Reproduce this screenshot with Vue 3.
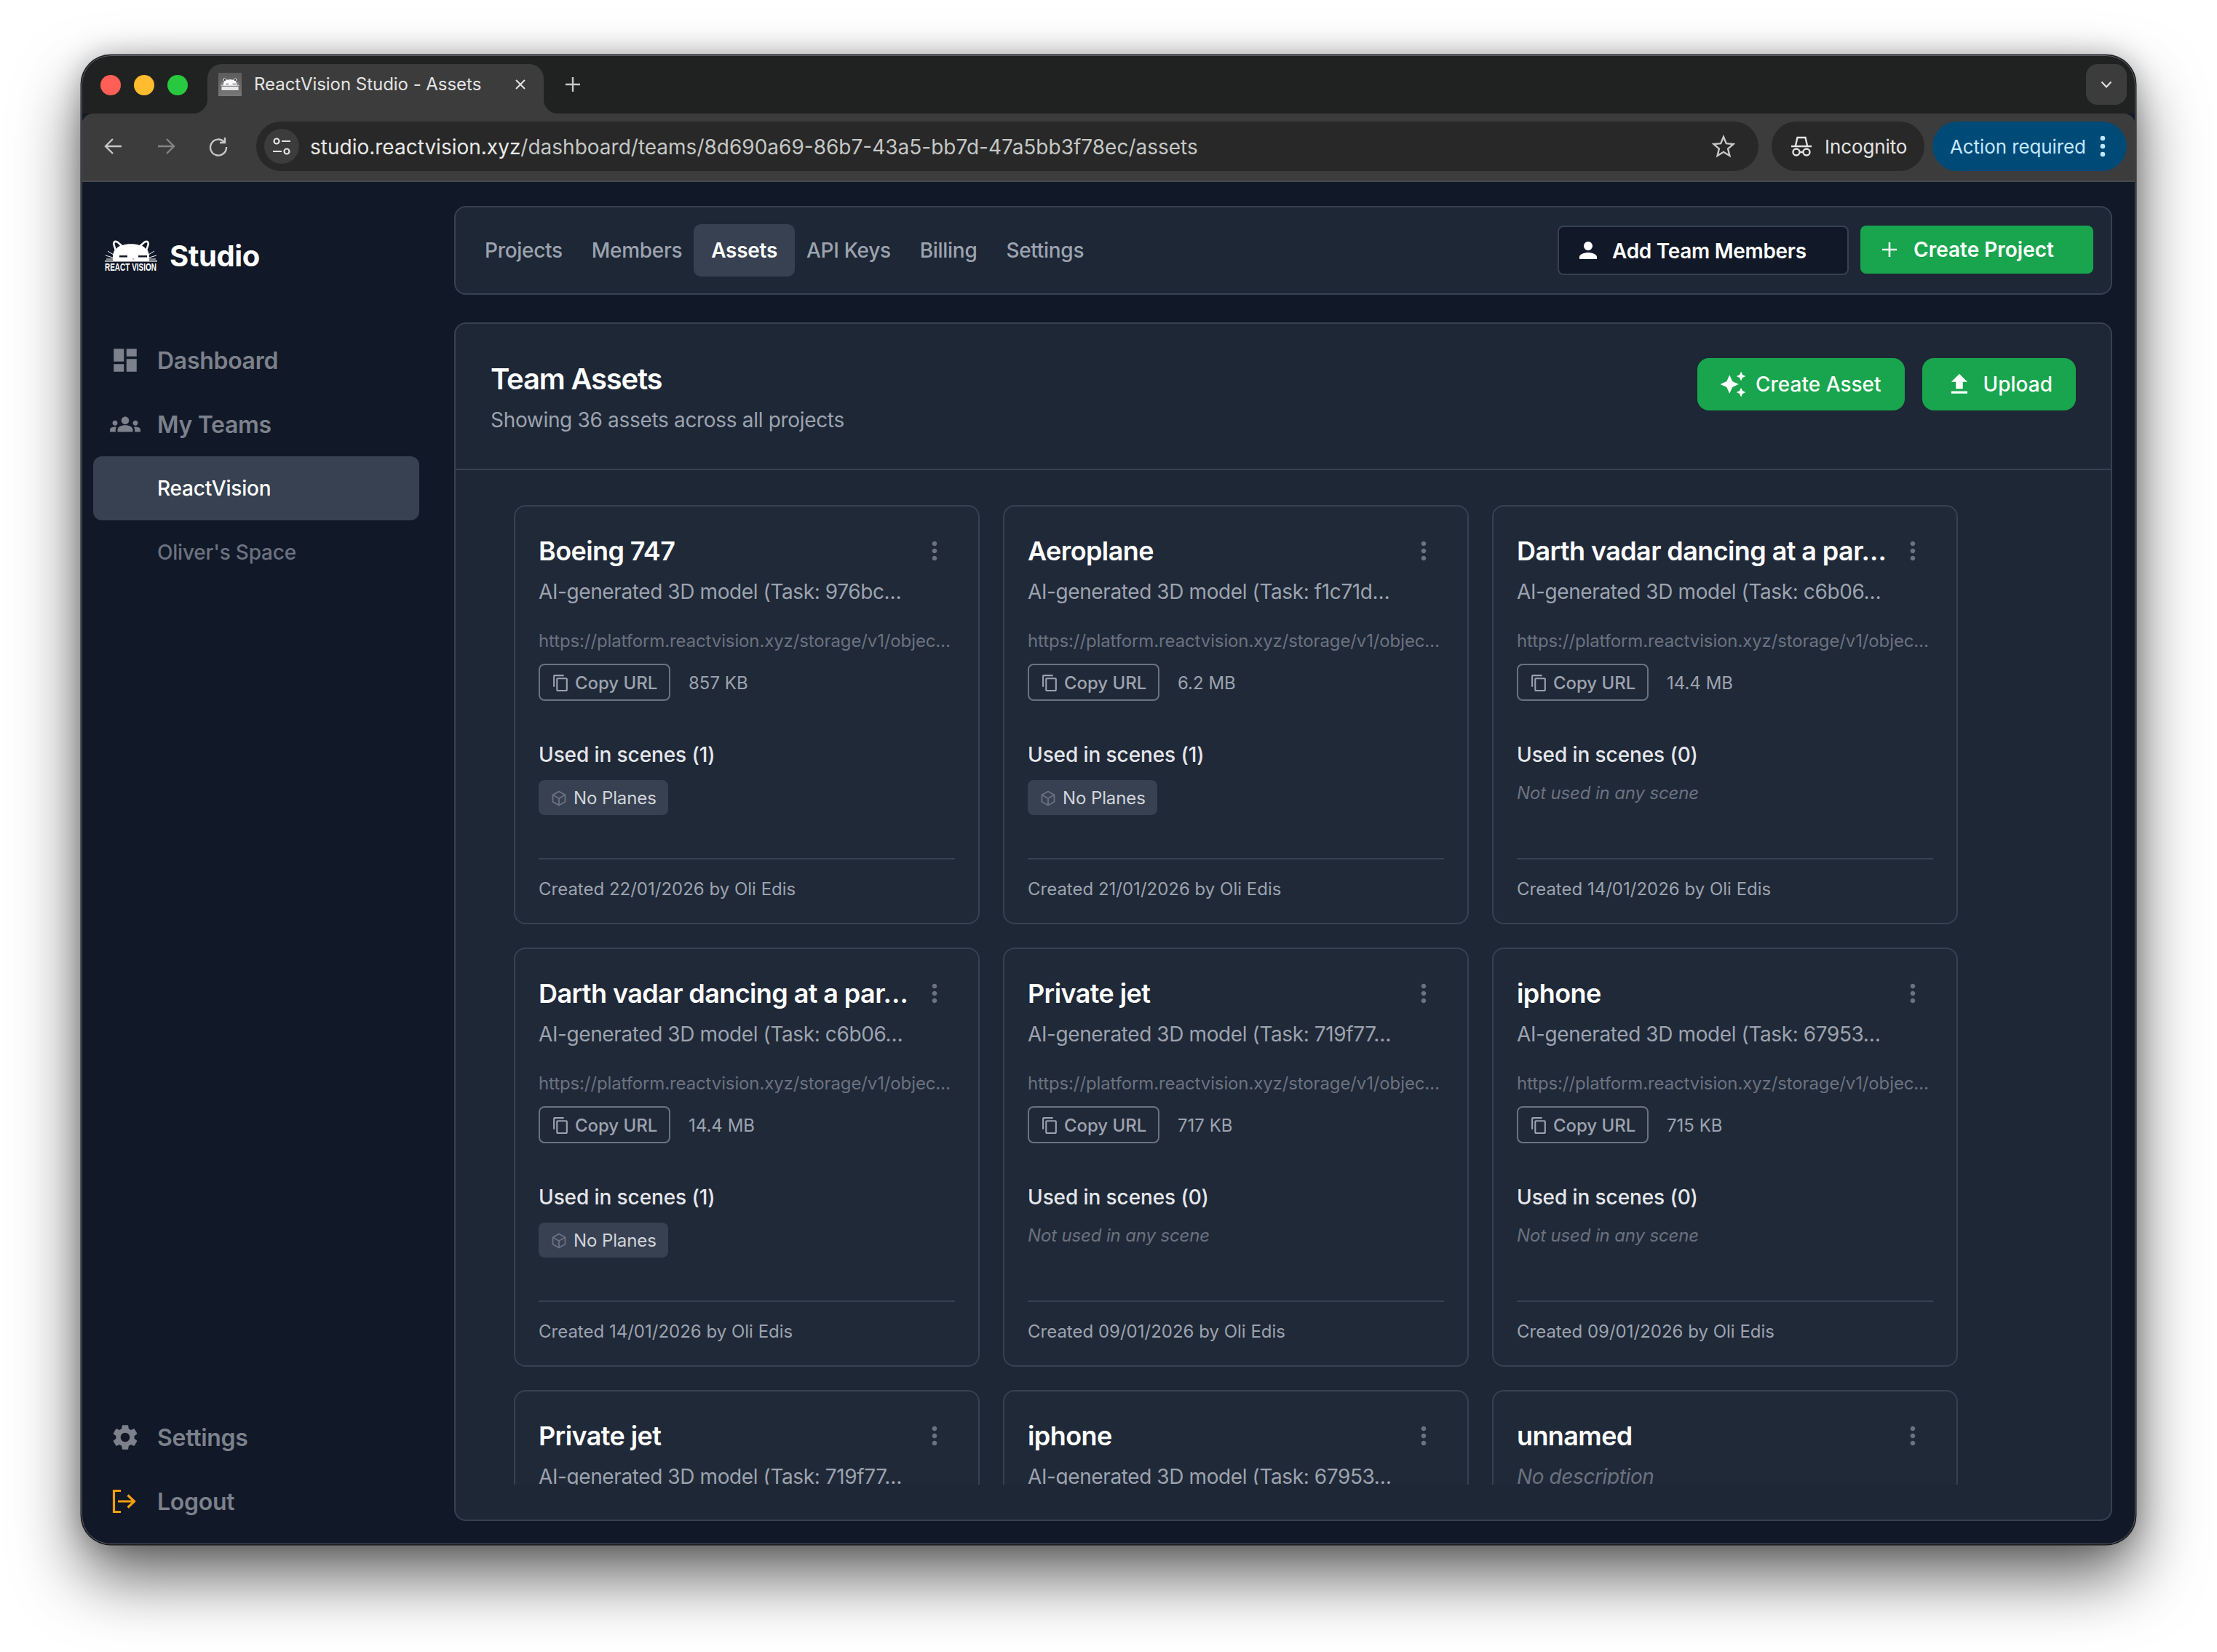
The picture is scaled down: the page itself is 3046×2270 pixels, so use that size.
<script setup>
const tabs = ['Projects', 'Members', 'Assets', 'API Keys', 'Billing', 'Settings']
const url = 'https://platform.reactvision.xyz/storage/v1/objec…'
const cards = [
  { name: 'Boeing 747', desc: 'AI-generated 3D model (Task: 976bc…', size: '857 KB', scenes: 1, date: '22/01/2026' },
  { name: 'Aeroplane', desc: 'AI-generated 3D model (Task: f1c71d…', size: '6.2 MB', scenes: 1, date: '21/01/2026' },
  { name: 'Darth vadar dancing at a par…', desc: 'AI-generated 3D model (Task: c6b06…', size: '14.4 MB', scenes: 0, date: '14/01/2026' },
  { name: 'Darth vadar dancing at a par…', desc: 'AI-generated 3D model (Task: c6b06…', size: '14.4 MB', scenes: 1, date: '14/01/2026' },
  { name: 'Private jet', desc: 'AI-generated 3D model (Task: 719f77…', size: '717 KB', scenes: 0, date: '09/01/2026' },
  { name: 'iphone', desc: 'AI-generated 3D model (Task: 67953…', size: '715 KB', scenes: 0, date: '09/01/2026' },
  { name: 'Private jet', desc: 'AI-generated 3D model (Task: 719f77…' },
  { name: 'iphone', desc: 'AI-generated 3D model (Task: 67953…' },
  { name: 'unnamed', desc: 'No description', empty: true }
]
</script>

<template>
  <div class="window">
    <svg class="defs" width="0" height="0">
      <symbol id="cat" viewBox="0 0 72 30">
        <path fill="#fff" d="M11 28C10.500 22 11.500 17 13.500 13.500L11 6C10.500 1 14 -1 18 1.500L24.500 7C29 4.500 43 4.500 47.500 7L54 1.500C58 -1 61.500 1 61 6L58.500 13.500C60.500 17 61.500 22 61 28Z" />
        <path fill="#111827" d="M13.500 5C13.500 3.200 15.500 2.800 17 4L21 7.500C18.500 9 16.500 10.500 15.500 12ZM58.500 5C58.500 3.200 56.500 2.800 55 4L51 7.500C53.500 9 55.500 10.500 56.500 12Z" />
        <rect x="20" y="21" width="11" height="2.500" fill="#111827" />
        <rect x="46" y="21" width="12" height="2.500" fill="#111827" />
        <circle cx="39" cy="26" r="1.300" fill="#f5a3c7" />
        <path stroke="#fff" stroke-width="1" fill="none" d="M4 15L12 20M1 21L11 24M2 26H11M68 15L60 20M71 21L61 24M70 26H61" />
        <rect x="0" y="28" width="72" height="1.500" fill="#fff" />
      </symbol>
    </svg>

    <header class="strip">
      <div class="lights"><i class="red"></i><i class="yellow"></i><i class="green"></i></div>
      <div class="tab">
        <span class="favicon">
          <svg width="26" height="26" viewBox="0 0 72 72"><use href="#cat" width="72" height="30" y="12" /><rect x="4" y="44" width="64" height="14" fill="#e8e8e8" /></svg>
        </span>
        <span class="tab-title">ReactVision Studio - Assets</span>
        <svg class="tab-x" viewBox="0 0 16 16" width="16" height="16"><path d="M2 2L14 14M14 2L2 14" stroke="#e3e3e3" stroke-width="2" fill="none" /></svg>
      </div>
      <svg class="tab-plus" viewBox="0 0 22 22" width="22" height="22"><path d="M11 1V21M1 11H21" stroke="#c7c7c7" stroke-width="2.400" fill="none" /></svg>
      <div class="strip-fill"></div>
      <div class="tab-search"><svg viewBox="0 0 16 10" width="16" height="10"><path d="M1.500 1.500L8 8.500L14.500 1.500" stroke="#e3e3e3" stroke-width="2" fill="none" /></svg></div>
    </header>

    <div class="toolbar">
      <div class="tb-btn"><svg viewBox="0 0 28 28" width="28" height="28"><path d="M25 14H4M13 4L3 14L13 24" stroke="#c7c7c7" stroke-width="2.400" fill="none" /></svg></div>
      <div class="tb-btn"><svg viewBox="0 0 28 28" width="28" height="28"><path d="M3 14H24M15 4L25 14L15 24" stroke="#858585" stroke-width="2.400" fill="none" /></svg></div>
      <div class="tb-btn"><svg viewBox="0 0 28 28" width="28" height="28"><path d="M22 8A11 11 0 1 0 25 15M23 2V9H16" stroke="#c7c7c7" stroke-width="2.400" fill="none" /></svg></div>
      <div class="omni">
        <span class="tune"><svg viewBox="0 0 26 26" width="26" height="26"><g stroke="#e3e3e3" stroke-width="2.200" fill="none"><circle cx="6" cy="6" r="3.500" /><path d="M13 6H25M1 20H13" /><circle cx="20" cy="20" r="3.500" /></g></svg></span>
        <span class="url"><b>studio.reactvision.xyz</b>/dashboard/teams/8d690a69-86b7-43a5-bb7d-47a5bb3f78ec/assets</span>
        <svg class="star" viewBox="0 0 32 32" width="32" height="32"><path d="M16 3L19.800 12.200L29.500 13L22.100 19.400L24.400 29L16 23.800L7.600 29L9.900 19.400L2.500 13L12.200 12.200Z" stroke="#c7c7c7" stroke-width="2.400" fill="none" /></svg>
      </div>
      <div class="incog">
        <svg viewBox="0 0 30 30" width="30" height="30"><g fill="none" stroke="#e3e3e3" stroke-width="2.400"><path d="M1 15H29M7 14L9.500 3H20.500L23 14" /><circle cx="8" cy="23" r="4.500" /><circle cx="22" cy="23" r="4.500" /><path d="M12.500 23H17.500" /></g></svg>
        <span>Incognito</span>
      </div>
      <div class="action">
        <span>Action required</span>
        <svg viewBox="0 0 8 30" width="8" height="30"><g fill="#c2e7ff"><circle cx="4" cy="4" r="3.300" /><circle cx="4" cy="15" r="3.300" /><circle cx="4" cy="26" r="3.300" /></g></svg>
      </div>
    </div>

    <div class="app">
      <aside class="sidebar">
        <div class="brand">
          <div class="logo">
            <svg width="72" height="30" viewBox="0 0 72 30"><use href="#cat" width="72" height="30" /></svg>
            <span class="logo-label">REACT VISION</span>
          </div>
          <span class="brand-name">Studio</span>
        </div>
        <nav class="side-nav">
          <a class="side-item">
            <svg class="side-ic" viewBox="0 0 24 24"><path d="M3 13h8V3H3v10zm0 8h8v-6H3v6zm10 0h8V11h-8v10zm0-18v6h8V3h-8z" /></svg>
            Dashboard
          </a>
          <a class="side-item">
            <svg class="side-ic" viewBox="0 0 24 24"><path d="M12 12.750c1.630 0 3.070.390 4.240.900 1.080.480 1.760 1.560 1.760 2.730V18H6v-1.610c0-1.180.680-2.260 1.760-2.730 1.170-.520 2.610-.910 4.240-.910zM4 13c1.100 0 2-.900 2-2s-.900-2-2-2-2 .900-2 2 .900 2 2 2zm1.130 1.100c-.370-.060-.740-.100-1.130-.100-.990 0-1.930.210-2.780.580C.480 14.900 0 15.620 0 16.430V18h4.500v-1.610c0-.830.230-1.610.630-2.290zM20 13c1.100 0 2-.900 2-2s-.900-2-2-2-2 .900-2 2 .900 2 2 2zm4 3.430c0-.810-.480-1.530-1.220-1.850-.850-.370-1.790-.580-2.780-.580-.390 0-.760.040-1.130.100.400.680.630 1.460.630 2.290V18H24v-1.570zM12 6c1.660 0 3 1.340 3 3s-1.340 3-3 3-3-1.340-3-3 1.340-3 3-3z" /></svg>
            My Teams
          </a>
          <a class="side-item sub active">ReactVision</a>
          <a class="side-item sub">Oliver's Space</a>
        </nav>
        <nav class="side-bottom">
          <a class="side-item">
            <svg class="side-ic" viewBox="0 0 24 24"><path d="M19.140 12.940c.040-.300.060-.610.060-.940 0-.320-.020-.640-.070-.940l2.030-1.580c.180-.140.230-.410.120-.610l-1.920-3.320c-.120-.220-.370-.290-.590-.220l-2.390.960c-.500-.380-1.030-.700-1.620-.940l-.360-2.540c-.040-.240-.240-.410-.480-.410h-3.840c-.240 0-.430.170-.470.410l-.360 2.540c-.590.240-1.130.570-1.620.940l-2.390-.960c-.220-.080-.470 0-.590.220L2.740 8.870c-.120.210-.080.470.120.610l2.030 1.580c-.050.300-.090.630-.090.940s.020.640.070.940l-2.030 1.580c-.180.140-.230.410-.12.610l1.920 3.320c.120.220.370.290.590.220l2.390-.960c.500.380 1.030.700 1.620.940l.360 2.540c.050.240.240.410.480.410h3.840c.240 0 .440-.170.470-.410l.360-2.540c.590-.240 1.130-.560 1.620-.94l2.390.960c.220.080.470 0 .590-.220l1.920-3.320c.120-.220.070-.470-.120-.610l-2.010-1.580zM12 15.600c-1.980 0-3.600-1.620-3.600-3.600s1.620-3.600 3.600-3.600 3.600 1.620 3.600 3.600-1.620 3.600-3.600 3.600z" /></svg>
            Settings
          </a>
          <a class="side-item">
            <svg class="side-ic logout" viewBox="0 0 42 42"><path d="M15 6.500H5.500V35.500H15M11 21H31M24.500 12.500L33.500 21L24.500 29.500" fill="none" stroke="#f59e0b" stroke-width="3.200" /></svg>
            Logout
          </a>
        </nav>
      </aside>

      <main class="main">
        <section class="topnav">
          <div class="tabs">
            <a v-for="t in tabs" :key="t" class="nav-tab" :class="{ active: t === 'Assets' }">{{ t }}</a>
          </div>
          <div class="top-actions">
            <button class="btn-dark">
              <svg viewBox="0 0 24 24" width="36" height="36"><path fill="#fff" d="M12 12c2.210 0 4-1.790 4-4s-1.790-4-4-4-4 1.790-4 4 1.790 4 4 4zm0 2c-2.670 0-8 1.340-8 4v2h16v-2c0-2.660-5.330-4-8-4z" /></svg>
              <span>Add Team Members</span>
            </button>
            <button class="btn-green small">
              <svg viewBox="0 0 22 22" width="22" height="22"><path d="M11 1V21M1 11H21" stroke="#fff" stroke-width="2.600" fill="none" /></svg>
              Create Project
            </button>
          </div>
        </section>

        <section class="panel">
          <div class="panel-head">
            <div>
              <h1>Team Assets</h1>
              <p>Showing 36 assets across all projects</p>
            </div>
            <div class="panel-actions">
              <button class="btn-green">
                <svg viewBox="0 0 24 24" width="38" height="38"><path fill="#fff" d="M19 9l1.250-2.750L23 5l-2.750-1.250L19 1l-1.250 2.750L15 5l2.750 1.250L19 9zm-7.500.500L9 4 6.500 9.500 1 12l5.500 2.500L9 20l2.500-5.500L17 12l-5.500-2.500zM19 15l-1.250 2.750L15 19l2.750 1.250L19 23l1.250-2.750L23 19l-2.750-1.250L19 15z" /></svg>
                Create Asset
              </button>
              <button class="btn-green upload">
                <svg viewBox="0 0 24 24" width="38" height="38"><path fill="#fff" d="M9 16h6v-6h4l-7-7-7 7h4zm-4 2h14v2H5z" /></svg>
                Upload
              </button>
            </div>
          </div>

          <div class="scroller">
            <div class="grid">
              <article v-for="(c, i) in cards" :key="i" class="card">
                <div class="card-top">
                  <h2>{{ c.name }}</h2>
                  <svg viewBox="0 0 24 24" width="40" height="40"><path fill="#6b7280" d="M12 8c1.100 0 2-.900 2-2s-.900-2-2-2-2 .900-2 2 .900 2 2 2zm0 2c-1.100 0-2 .900-2 2s.900 2 2 2 2-.900 2-2-.900-2-2-2zm0 6c-1.100 0-2 .900-2 2s.900 2 2 2 2-.900 2-2-.900-2-2-2z" /></svg>
                </div>
                <p class="desc" :class="{ none: c.empty }">{{ c.desc }}</p>
                <template v-if="c.size">
                  <p class="url-line">{{ url }}</p>
                  <div class="copy-row">
                    <button class="copy">
                      <svg viewBox="0 0 24 24" width="25" height="25"><path fill="#9ca3af" d="M16 1H4c-1.100 0-2 .900-2 2v14h2V3h12V1zm3 4H8c-1.100 0-2 .900-2 2v14c0 1.100.900 2 2 2h11c1.100 0 2-.900 2-2V7c0-1.100-.900-2-2-2zm0 16H8V7h11v14z" /></svg>
                      Copy URL
                    </button>
                    <span class="size">{{ c.size }}</span>
                  </div>
                  <h3>Used in scenes ({{ c.scenes }})</h3>
                  <span v-if="c.scenes" class="chip">
                    <svg viewBox="0 0 20 22" width="20" height="22"><g fill="none" stroke="#6b7280" stroke-width="1.800"><path d="M10 1.500L18.500 6.300V15.700L10 20.500L1.500 15.700V6.300Z" /><path d="M1.500 6.300L10 11L18.500 6.300M10 11V20.500" /></g></svg>
                    No Planes
                  </span>
                  <p v-else class="unused">Not used in any scene</p>
                  <footer>Created {{ c.date }} by Oli Edis</footer>
                </template>
              </article>
            </div>
          </div>
        </section>
      </main>
    </div>
  </div>
</template>

<style>
html, body { margin: 0; height: 100%; background: #fff; }
body { overflow: hidden; }
#app { height: 100%; padding-top: 76px; box-sizing: border-box; }
</style>

<style scoped>
* { box-sizing: border-box; }
.defs { position: absolute; }
.window {
  position: relative;
  width: 2822px;
  height: 2046px;
  margin: 0 0 0 112px;
  border-radius: 40px;
  overflow: hidden;
  background: #111827;
  font-family: Inter, "Noto Sans", sans-serif;
  display: flex;
  flex-direction: column;
  box-shadow: 0 44px 90px rgba(0,0,0,.62), 0 0 36px rgba(0,0,0,.25), 0 0 0 1.500px #2a2c30;
}
.window::after {
  content: "";
  position: absolute;
  inset: 0;
  border: 1.500px solid #63666c;
  border-radius: 40px;
  pointer-events: none;
}
.strip {
  height: 80px;
  background: #202221;
  display: flex;
  align-items: flex-start;
  padding-top: 12px;
  flex: none;
}
.lights { display: flex; gap: 18px; padding: 15px 0 0 26px; width: 173px; }
.lights i { width: 28px; height: 28px; border-radius: 50%; display: block; }
.red { background: #ff5f57; }
.yellow { background: #febc2e; }
.green { background: #28c840; }
.tab {
  position: relative;
  width: 462px;
  height: 68px;
  background: #3c3c3c;
  border-radius: 20px 20px 0 0;
  display: flex;
  align-items: flex-start;
  padding: 12px 24px 0 15px;
}
.tab::before, .tab::after {
  content: "";
  position: absolute;
  bottom: 0;
  width: 20px;
  height: 20px;
}
.tab::before { left: -20px; background: radial-gradient(circle at 0 0, #202221 20px, #3c3c3c 20.500px); }
.tab::after { right: -20px; background: radial-gradient(circle at 100% 0, #202221 20px, #3c3c3c 20.500px); }
.favicon {
  width: 32px;
  height: 32px;
  background: linear-gradient(#5c5c5c, #777);
  display: flex;
  align-items: center;
  justify-content: center;
}
.tab-title { margin-left: 17px; font-size: 24px; line-height: 32px; color: #e3e3e3; white-space: nowrap; letter-spacing: -.04px; }
.tab-x { margin: 8px 0 0 auto; }
.tab-plus { margin: 17px 0 0 29px; }
.strip-fill { flex: 1; }
.tab-search {
  width: 56px;
  height: 56px;
  background: #3c3c3c;
  border-radius: 16px;
  margin-right: 12px;
  display: flex;
  align-items: center;
  justify-content: center;
}
.toolbar {
  height: 94px;
  flex: none;
  background: #3c3c3c;
  border-bottom: 2px solid #474a4c;
  border-radius: 16px 16px 0 0;
  display: flex;
  align-items: center;
  padding: 0 12px 2px 8px;
}
.tb-btn { width: 72px; display: flex; justify-content: center; }
.omni {
  flex: 1;
  margin-left: 16px;
  height: 68px;
  border-radius: 34px;
  background: #282828;
  display: flex;
  align-items: center;
  padding: 0 32px 0 11px;
}
.tune {
  width: 48px;
  height: 48px;
  border-radius: 50%;
  background: #3c3c3c;
  display: flex;
  align-items: center;
  justify-content: center;
}
.url { margin-left: 15px; font-size: 28px; padding-top: 1px; color: #c4c7c5; white-space: nowrap; flex: 1; }
.url b { font-weight: 400; color: #e8e8e8; }
.incog {
  margin-left: 18px;
  width: 210px;
  height: 68px;
  border-radius: 34px;
  background: #282828;
  display: flex;
  align-items: center;
  gap: 17px;
  padding-left: 26px;
  font-size: 26px;
  letter-spacing: -.1px;
  color: #e3e3e3;
}
.action {
  margin-left: 11px;
  width: 267px;
  height: 68px;
  border-radius: 34px;
  background: #004a77;
  color: #c2e7ff;
  display: flex;
  align-items: center;
  justify-content: space-between;
  padding: 0 29px 0 24px;
  font-size: 26px;
  letter-spacing: -.1px;
  white-space: nowrap;
}
.app { flex: 1; min-height: 0; display: flex; }
.sidebar {
  width: 512px;
  flex: none;
  display: flex;
  flex-direction: column;
  padding: 0 48px 15px 16px;
}
.brand {
  display: flex;
  align-items: flex-start;
  gap: 17px;
  padding: 80px 0 0 16px;
  height: 201px;
  color: #fff;
}
.brand-name { font-size: 40px; font-weight: 700; letter-spacing: -.4px; line-height: 44px; }
.logo { width: 72px; height: 44px; flex: none; overflow: hidden; }
.logo svg { display: block; }
.logo-label {
  display: block;
  width: 108px;
  font-family: "Liberation Sans", sans-serif;
  font-size: 15px;
  line-height: 14px;
  font-weight: 700;
  white-space: nowrap;
  color: #fff;
  transform: scaleX(.665);
  transform-origin: left center;
}
.side-nav { flex: 1; }
.side-item {
  height: 88px;
  display: flex;
  align-items: center;
  gap: 23px;
  padding-left: 23px;
  font-size: 32px;
  font-weight: 600;
  letter-spacing: -.3px;
  color: #7c818c;
  white-space: nowrap;
}
.side-item.sub { padding-left: 88px; font-size: 28px; font-weight: 500; letter-spacing: -.2px; color: #6b7280; }
.side-item.active { background: #374151; border-radius: 12px; color: #fff; }
.side-ic { width: 42px; height: 42px; fill: #7c818c; flex: none; }
.side-ic.logout { fill: none; }
.main {
  flex: 1;
  min-width: 0;
  display: flex;
  flex-direction: column;
  gap: 38px;
  padding: 33px 32px 32px 0;
}
.topnav {
  height: 122px;
  flex: none;
  background: #1e2736;
  border: 2px solid #374151;
  border-radius: 16px;
  display: flex;
  align-items: center;
  justify-content: space-between;
  padding: 0 24px 0 20px;
}
.tabs { display: flex; }
.nav-tab {
  height: 72px;
  display: flex;
  align-items: center;
  padding: 0 20px;
  font-size: 28px;
  font-weight: 500;
  letter-spacing: -.3px;
  color: #9ca3af;
}
.nav-tab.active {
  margin: 0 -4px;
  padding: 0 24px;
  background: #374151;
  border-radius: 10px;
  color: #fff;
  font-weight: 600;
}
.top-actions { display: flex; gap: 16px; align-items: flex-start; }
button { font-family: inherit; cursor: pointer; }
.btn-dark {
  width: 400px;
  height: 68px;
  background: #111827;
  border: 2px solid #374151;
  border-radius: 8px;
  color: #fff;
  font-size: 28px;
  font-weight: 600;
  letter-spacing: -.3px;
  display: flex;
  align-items: center;
  gap: 15px;
  padding: 0 0 0 22px;
}
.btn-dark span { padding-top: 2px; }
.btn-green {
  height: 72px;
  background: #18a54d;
  border: 0;
  border-radius: 16px;
  color: #fff;
  font-size: 28px;
  font-weight: 500;
  display: flex;
  align-items: center;
  gap: 12px;
  padding: 0 32px 0 30px;
}
.btn-green.upload { gap: 14px; padding: 0 32px; }
.btn-green.small {
  width: 320px;
  height: 66px;
  border-radius: 8px;
  padding: 0 0 0 29px;
  gap: 22px;
  font-weight: 600;
}
.panel {
  flex: 1;
  min-height: 0;
  background: #1e2736;
  border: 2px solid #374151;
  border-radius: 16px;
  display: flex;
  flex-direction: column;
  padding-bottom: 48px;
}
.panel-head {
  height: 201px;
  flex: none;
  border-bottom: 2px solid #374151;
  display: flex;
  justify-content: space-between;
  padding: 48px 48px 0 48px;
}
h1 { margin: 0; font-size: 40px; line-height: 56px; font-weight: 600; letter-spacing: -1.200px; color: #fff; }
.panel-head p { margin: 8px 0 0; font-size: 28px; line-height: 40px; letter-spacing: -.32px; color: #9ca3af; }
.panel-actions { display: flex; gap: 24px; margin-top: -1px; }
.scroller { flex: 1; min-height: 0; overflow: hidden; padding: 48px 0 0 80px; }
.grid { display: grid; grid-template-columns: repeat(3, 640px); gap: 32px; }
.card {
  height: 576px;
  background: #202938;
  border: 2px solid #374151;
  border-radius: 16px;
  padding: 33px 32px 30px;
  display: flex;
  flex-direction: column;
}
.card-top { display: flex; justify-content: space-between; align-items: center; height: 56px; padding-right: 8px; }
h2 { margin: 0; font-size: 36px; font-weight: 600; letter-spacing: -.6px; color: #fff; white-space: nowrap; }
.desc { margin: 8px 0 0; font-size: 28px; line-height: 40px; letter-spacing: -.4px; color: #9ca3af; white-space: nowrap; }
.desc.none { font-style: italic; color: #6b7280; }
.url-line { margin: 32px 0 0; font-size: 24px; line-height: 32px; letter-spacing: -.12px; color: #6b7280; white-space: nowrap; }
.copy-row { display: flex; align-items: center; gap: 25px; margin-top: 15px; }
.copy {
  width: 181px;
  height: 51px;
  background: transparent;
  border: 2px solid #6b7280;
  border-radius: 8px;
  color: #9ca3af;
  font-size: 24px;
  font-weight: 500;
  letter-spacing: -.05px;
  display: flex;
  align-items: center;
  gap: 7px;
  padding: 1px 0 0 16px;
}
.size { font-size: 24px; color: #9ca3af; padding-top: 2px; }
h3 { margin: 54px 0 0; font-size: 28px; line-height: 40px; font-weight: 500; letter-spacing: -.1px; color: #e5e7eb; }
.chip {
  align-self: flex-start;
  margin-top: 15px;
  width: 178px;
  height: 48px;
  background: #374151;
  border-radius: 8px;
  display: flex;
  align-items: center;
  gap: 10px;
  padding: 1px 0 0 18px;
  font-size: 24px;
  letter-spacing: -.1px;
  color: #d1d5db;
}
.unused { margin: 17px 0 0; font-size: 24px; line-height: 32px; font-style: italic; letter-spacing: -.15px; color: #6b7280; }
footer {
  margin-top: auto;
  border-top: 2px solid #374151;
  padding-top: 25px;
  font-size: 24px;
  line-height: 32px;
  color: #9ca3af;
}
</style>
